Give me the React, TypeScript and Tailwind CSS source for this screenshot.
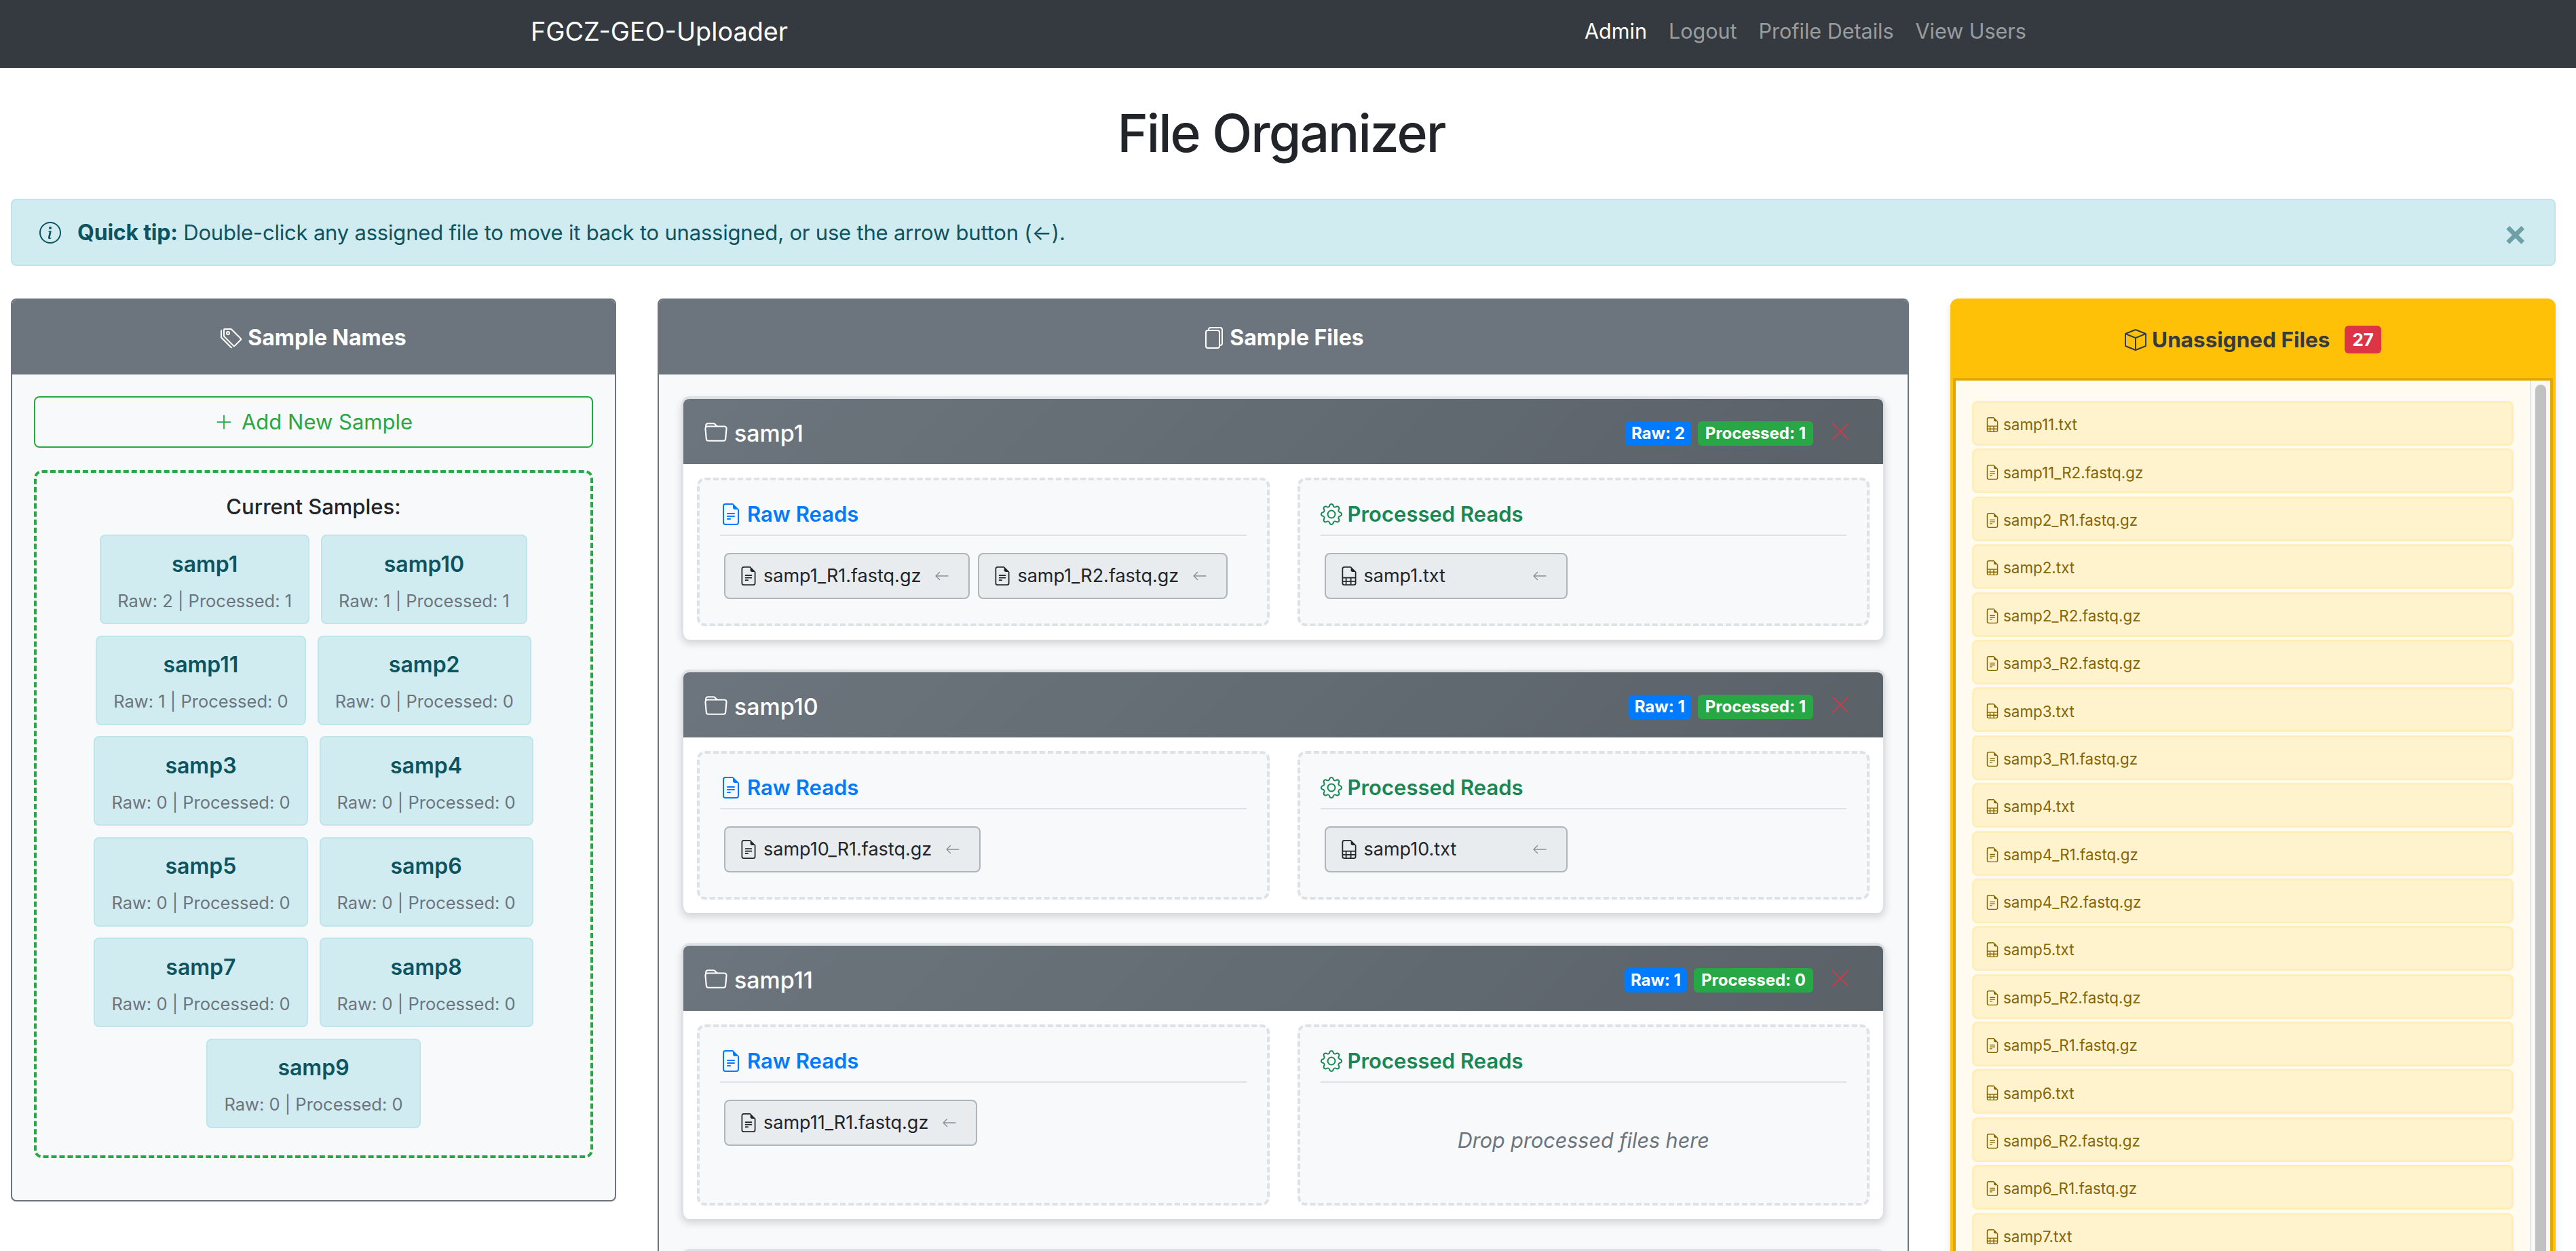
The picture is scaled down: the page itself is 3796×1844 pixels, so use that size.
import { BsArrowLeft, BsBox, BsFileEarmarkSpreadsheet, BsFileEarmarkText, BsFiles, BsFolder, BsGear, BsInfoCircle, BsPlusLg, BsTags } from 'react-icons/bs';

const TILES = [
    { name: 'samp1', raw: 2, processed: 1 },
    { name: 'samp10', raw: 1, processed: 1 },
    { name: 'samp11', raw: 1, processed: 0 },
    { name: 'samp2', raw: 0, processed: 0 },
    { name: 'samp3', raw: 0, processed: 0 },
    { name: 'samp4', raw: 0, processed: 0 },
    { name: 'samp5', raw: 0, processed: 0 },
    { name: 'samp6', raw: 0, processed: 0 },
    { name: 'samp7', raw: 0, processed: 0 },
    { name: 'samp8', raw: 0, processed: 0 },
    { name: 'samp9', raw: 0, processed: 0 },
];

const SAMPLES = [
    { name: 'samp1', raw: ['samp1_R1.fastq.gz', 'samp1_R2.fastq.gz'], processed: ['samp1.txt'] },
    { name: 'samp10', raw: ['samp10_R1.fastq.gz'], processed: ['samp10.txt'] },
    { name: 'samp11', raw: ['samp11_R1.fastq.gz'], processed: [] },
    { name: 'samp2', raw: [], processed: [] },
];

const UNASSIGNED = [
    'samp11.txt', 'samp11_R2.fastq.gz', 'samp2_R1.fastq.gz', 'samp2.txt', 'samp2_R2.fastq.gz', 'samp3_R2.fastq.gz',
    'samp3.txt', 'samp3_R1.fastq.gz', 'samp4.txt', 'samp4_R1.fastq.gz', 'samp4_R2.fastq.gz', 'samp5.txt',
    'samp5_R2.fastq.gz', 'samp5_R1.fastq.gz', 'samp6.txt', 'samp6_R2.fastq.gz', 'samp6_R1.fastq.gz', 'samp7.txt',
];

function FileChip({ file }: { file: string }) {
    const isTxt = file.endsWith('.txt');
    return (
        <div className="flex h-[68px] min-w-[358px] items-center justify-between gap-[20px] rounded-lg border-2 border-[#adb5bd] bg-[#e9ecef] pl-[20px] pr-[28px] text-[27px] text-[#212529]">
            <span className="flex items-center gap-[8px]">
                {isTxt ? <BsFileEarmarkSpreadsheet size={28} /> : <BsFileEarmarkText size={28} />}
                {file}
            </span>
            <BsArrowLeft size={22} className="text-[#868e96]" />
        </div>
    );
}

function Zone({ kind, files }: { kind: 'raw' | 'processed'; files: string[] }) {
    const raw = kind === 'raw';
    return (
        <div className="rounded-xl border-4 border-dashed border-[#dee2e6] bg-[#f8f9fa] px-[30px]">
            <div className={`mt-[30px] flex h-[52px] items-center gap-[8px] border-b-2 border-[#dee2e6] pb-[10px] text-[31px] font-semibold ${raw ? 'text-[#007bff]' : 'text-[#198754]'}`}>
                {raw ? <BsFileEarmarkText size={32} /> : <BsGear size={32} />}
                {raw ? 'Raw Reads' : 'Processed Reads'}
            </div>
            {files.length > 0 ? (
                <div className="flex gap-[12px] px-[6px] pb-[36px] pt-[25px]">
                    {files.map((f) => (
                        <FileChip key={f} file={f} />
                    ))}
                </div>
            ) : (
                <div className="flex h-[177px] items-center justify-center pb-[8px] text-[30.5px] italic text-[#6c757d]">
                    {raw ? 'Drop raw files here' : 'Drop processed files here'}
                </div>
            )}
        </div>
    );
}

function SampleCard({ sample }: { sample: (typeof SAMPLES)[number] }) {
    return (
        <div className="mb-[44px] overflow-hidden rounded-xl border-x-[3px] border-t-4 border-[#dee2e6] bg-white shadow-[0_6px_12px_rgba(0,0,0,0.15)]">
            <div className="flex h-[96px] items-center justify-between bg-[linear-gradient(135deg,#6c757d,#5a6268)] pl-[31px] pr-[50px] pt-[4px] text-white">
                <div className="flex items-center gap-[10px] text-[34px] font-medium">
                    <BsFolder size={34} />
                    {sample.name}
                </div>
                <div className="flex items-center">
                    <span className="mt-[2px] flex h-[36px] items-center rounded-md bg-[#007bff] px-[9px] text-[24px] font-bold">Raw: {sample.raw.length}</span>
                    <span className="ml-[10px] mt-[2px] flex h-[36px] items-center rounded-md bg-[#28a745] px-[11px] text-[24px] font-bold">Processed: {sample.processed.length}</span>
                    <svg width="26" height="24" viewBox="0 0 26 24" className="mb-[4px] ml-[27px] text-[#dc3545]" fill="none" stroke="currentColor" strokeWidth="1.6">
                        <path d="M1 0 25 24M25 0 1 24" />
                    </svg>
                </div>
            </div>
            <div className="grid grid-cols-2 gap-[41px] p-[20px]">
                <Zone kind="raw" files={sample.raw} />
                <Zone kind="processed" files={sample.processed} />
            </div>
        </div>
    );
}

export default function App() {
    return (
        <div className="h-[1844px] overflow-hidden bg-white font-['Inter',sans-serif] text-[#212529]">
            <nav className="flex h-[100px] items-center bg-[#343a40] pb-[8px] pl-[782px]">
                <span className="text-[37.8px] text-white">FGCZ-GEO-Uploader</span>
                <div className="ml-[1174px] flex gap-[32px] text-[30.5px] text-white/50">
                    <span className="text-white">Admin</span>
                    <span>Logout</span>
                    <span>Profile Details</span>
                    <span>View Users</span>
                </div>
            </nav>

            <h1 className="flex h-[193px] items-center justify-center pr-[20px] text-[77px] font-medium tracking-[-2px]">File Organizer</h1>

            <div className="ml-4 mr-[30px] flex h-[99px] items-center justify-between rounded-lg border-2 border-[#bee5eb] bg-[#d1ecf1] px-[40px] text-[31px] tracking-[-0.2px] text-[#0c5460]">
                <div className="flex items-center gap-[24px]">
                    <BsInfoCircle size={32} />
                    <span>
                        <b className="text-[32px] font-bold">Quick tip:</b> Double-click any assigned file to move it back to unassigned, or use the arrow button (←).
                    </span>
                </div>
                <span className="text-[52px] font-bold leading-none text-[#0c5460]/50">×</span>
            </div>

            <div className="mt-[48px] grid grid-cols-[892px_1844px_892px] items-start gap-[61px] px-4">
                <section className="overflow-hidden rounded-lg border-2 border-[#6c757d] bg-[#f8f9fa]">
                    <header className="flex h-[110px] items-center justify-center gap-[8px] bg-[#6c757d] pt-[2px] text-[32px] font-bold text-white">
                        <BsTags size={32} />
                        Sample Names
                    </header>
                    <div className="px-[32px] pb-[62px] pt-[32px]">
                        <div className="flex h-[76px] items-center justify-center gap-[12px] rounded-lg border-2 border-[#28a745] text-[31px] text-[#28a745]">
                            <BsPlusLg size={28} />
                            Add New Sample
                        </div>
                        <div className="mt-[33px] rounded-xl border-4 border-dashed border-[#28a745] px-[8px] pb-[40px]">
                            <div className="flex h-[91px] items-center justify-center pt-[10px] text-[31px] font-medium">Current Samples:</div>
                            <div className="flex flex-wrap justify-center gap-x-[17px] gap-y-[16.5px]">
                                {TILES.map((t) => (
                                    <div key={t.name} className="flex h-[132px] flex-col items-center justify-center gap-[11px] rounded-lg border-2 border-[#bee5eb] bg-[#d1ecf1] px-[24px] pt-[5px]">
                                        <span className="text-[32px] font-semibold text-[#0c5460]">{t.name}</span>
                                        <span className="text-[25.5px] text-[#6c757d]">Raw: {t.raw} | Processed: {t.processed}</span>
                                    </div>
                                ))}
                            </div>
                        </div>
                    </div>
                </section>

                <section className="rounded-lg border-2 border-[#6c757d] bg-[#f8f9fa]">
                    <header className="flex h-[110px] items-center justify-center gap-[8px] rounded-t-md bg-[#6c757d] pt-[2px] text-[32px] font-bold text-white">
                        <BsFiles size={32} />
                        Sample Files
                    </header>
                    <div className="px-[33px] pt-[32px]">
                        {SAMPLES.map((s) => (
                            <SampleCard key={s.name} sample={s} />
                        ))}
                    </div>
                </section>

                <section className="overflow-hidden rounded-xl border-4 border-[#ffc107] bg-[#ffc107] shadow-[0_4px_12px_rgba(0,0,0,0.1)]">
                    <header className="flex h-[113px] items-center justify-center gap-[8px] text-[31.5px] font-bold text-[#343a40]">
                        <BsBox size={32} />
                        Unassigned Files
                        <span className="ml-[14px] rounded-md bg-[#dc3545] px-[11px] py-[1px] text-[26px] text-white">27</span>
                    </header>
                    <div className="flex border-4 border-[#e0a800] bg-[#fffbf0]">
                        <div className="flex min-w-0 flex-1 flex-col gap-[4.4px] px-[24px] pt-[30px]">
                            {UNASSIGNED.map((f) => (
                                <div key={f} className="flex h-[66px] shrink-0 items-center gap-[5px] rounded-lg border-[3px] border-[#ffeeba] bg-[#fff3cd] pl-[16px] pt-[4px] text-[22.4px] text-[#856404]">
                                    {f.endsWith('.txt') ? <BsFileEarmarkSpreadsheet size={22} /> : <BsFileEarmarkText size={22} />}
                                    {f}
                                </div>
                            ))}
                        </div>
                        <div className="w-[30px] shrink-0 border-l-2 border-[#e5e5e5] bg-[#f8f8f8] pt-[6px]">
                            <div className="ml-[6px] h-[1400px] w-[16px] rounded-full bg-[#c1c1c1]" />
                        </div>
                    </div>
                </section>
            </div>
        </div>
    );
}
